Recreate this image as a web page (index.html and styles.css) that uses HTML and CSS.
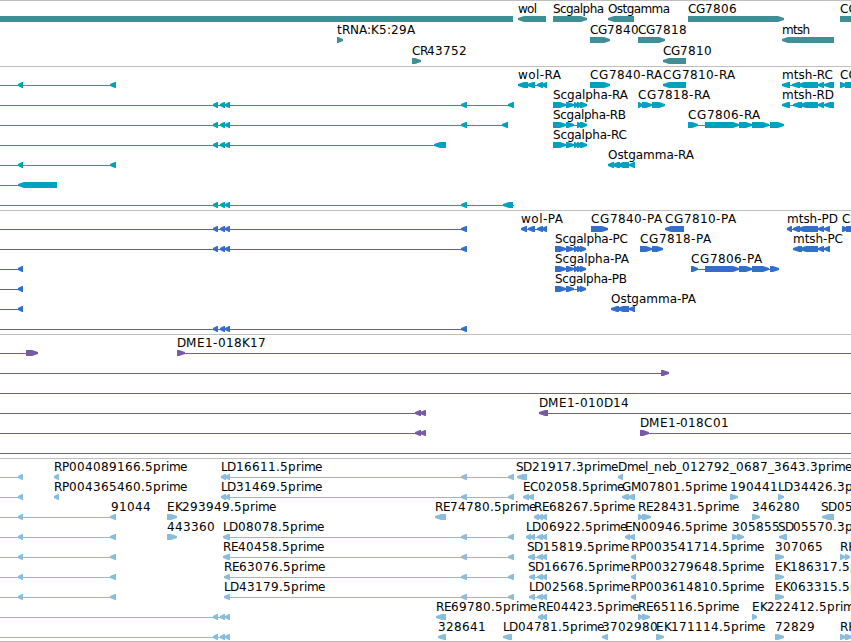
FILE: index.html
```html
<!DOCTYPE html>
<html lang="en">
<head>
<meta charset="utf-8">
<title>Genome region</title>
<link rel="stylesheet" href="styles.css">
</head>
<body>
<main class="browser">
<section class="track genes" id="genes"></section>
<section class="track transcripts" id="transcripts"></section>
<section class="track proteins" id="proteins"></section>
<section class="track clones" id="clones"></section>
<section class="track ests" id="ests"></section>
</main>
<script src="tracks.js"></script>
</body>
</html>
```
FILE: styles.css
```css
body { margin: 0; background: #fff; overflow: hidden; }
.browser { width: 851px; height: 642px; display: flex; flex-direction: column; box-sizing: border-box; border-bottom: 1px solid #bebebe; }
.track { border-top: 1px solid #bebebe; padding: 2px 0 1px; display: flex; flex-direction: column; --row: 20px; }
.row { display: block; width: 851px; height: var(--row); flex: none; overflow: visible; }
.genes { --row: 21px; padding-bottom: 0; color: #408e96; }
.transcripts { color: #00a0c0; }
.proteins { color: #326ecc; }
.clones { color: #7859a7; }
.ests { padding-bottom: 0; color: #89bddd; }
.row path, .row rect { fill: currentColor; }
.row rect { shape-rendering: crispEdges; }
.row text { fill: #000; font-family: "DejaVu Sans", sans-serif; font-size: 12px; }
```
FILE: tracks.js
```js
// Feature: direction, exon spans "a-b a-b", connector [from, to], label, label start, label end
const L = '<', R = '>', B = '=';
const mid = '213-218 220-225 225-230';
const f = (dir, exons, line, label, x, end) => ({ dir, exons, line, label, x, end });
const near = () => f(L, '18-23', [0, 20]);
const pair = () => f(L, '18-23 110-116', [0, 113]);
const scg = (exons, name, x, end) => f(R, exons, [x, 586], name, x, end);
const est = (x, exons, name, end) => f(L, exons + ' 461-467 508-514', [x, 513], name, x, end);

const tracks = {
  genes: [
    [f(B, '0-513'), f(L, '518-546', 0, 'wol', 518, 537), f(R, '553-587', 0, 'Scgalpha', 553, 604),
     f(L, '608-634', 0, 'Ostgamma', 608, 670), f(R, '688-784', 0, 'CG7806', 688, 737), f(B, '840-851', 0, 'CG', 840)],
    [f(R, '337-343', 0, 'tRNA:K5:29A', 337, 415), f(R, '590-610', 0, 'CG7840', 590, 639),
     f(R, '638-665', 0, 'CG7818', 638, 687), f(L, '782-834', 0, 'mtsh', 782, 810)],
    [f(R, '412-421', 0, 'CR43752', 412, 467), f(L, '663-686', 0, 'CG7810', 663, 712)]
  ],
  transcripts: [
    [pair(), f(L, '518-528 527-535 537-543 542-547', [518, 547], 'wol-RA', 518, 561),
     f(R, '590-610', 0, 'CG7840-RA', 590, 663), f(L, '663-686', 0, 'CG7810-RA', 663, 736),
     f(L, '782-790 792-800 798-818 818-824 824-834', [782, 834], 'mtsh-RC', 782, 833),
     f(R, '840-846 845-858', 0, 'CG', 840)],
    [f(L, mid + ' 461-467 508-514', [0, 513]),
     scg('553-566 566-574 574-578 577-582 580-587', 'Scgalpha-RA', 553, 628),
     f(R, '638-643 642-652 652-665', 0, 'CG7818-RA', 638, 711),
     f(L, '782-790 793-802 800-818 818-824 824-834', [782, 834], 'mtsh-RD', 782, 834)],
    [f(L, mid + ' 461-467 502-508', [0, 507]),
     scg('553-566 566-574 577-582 580-587', 'Scgalpha-RB', 553, 626),
     f(R, '688-698 705-739 739-752 752-769 770-784', [688, 784], 'CG7806-RA', 688, 761)],
    [f(L, mid + ' 434-446', [0, 440]),
     scg('553-566 566-574 574-578 577-582 580-587', 'Scgalpha-RC', 553, 627)],
    [pair(), f(L, '608-614 612-620 617-629 629-635', [608, 635], 'Ostgamma-RA', 608, 694)],
    [f(L, '18-57', [0, 20])],
    [f(L, mid + ' 461-467 503-513', [0, 514])]
  ],
  proteins: [
    [f(L, mid + ' 461-467', [0, 466]), f(L, '521-527 528-535 537-543 542-547', [521, 547], 'wol-PA', 521, 563),
     f(R, '591-608', 0, 'CG7840-PA', 591, 663), f(L, '665-684', 0, 'CG7810-PA', 665, 737),
     f(L, '787-792 793-800 798-818 818-824 824-830', [787, 830], 'mtsh-PD', 787, 838),
     f(R, '842-848 846-858', 0, 'C', 842)],
    [f(L, mid + ' 461-467', [0, 466]), scg('555-566 566-574 574-578 577-582 580-586', 'Scgalpha-PC', 555, 628),
     f(R, '640-652 652-663', 0, 'CG7818-PA', 640, 712),
     f(L, '793-802 800-818 818-824 824-830', [793, 830], 'mtsh-PC', 793, 843)],
    [near(), scg('555-566 566-574 574-578 577-582 580-586', 'Scgalpha-PA', 555, 629),
     f(R, '691-698 705-739 739-752 752-769 770-779', [691, 779], 'CG7806-PA', 691, 763)],
    [near(), scg('555-566 566-574 577-582 580-586', 'Scgalpha-PB', 555, 627)],
    [near(), f(L, '611-619 617-629 629-635', [611, 635], 'Ostgamma-PA', 611, 696)],
    [f(L, mid + ' 461-467', [0, 466])]
  ],
  clones: [
    [f(R, '26-38', [0, 38]), f(R, '177-185', [177, 851], 'DME1-018K17', 177, 266)],
    [f(R, '661-669', [0, 669])],
    [f(L, '', [0, 851])],
    [f(L, '415-421 420-426', [0, 426]), f(L, '539-548', [539, 851], 'DME1-010D14', 539, 629)],
    [f(L, '415-421 420-426', [0, 426]), f(R, '640-649', [640, 851], 'DME1-018C01', 640, 729)],
    [f(L, '', [0, 851])]
  ],
  ests: [
    [near(), f(L, '54-59', 0, 'RP004089166.5prime', 54, 187), est(221, '221-226 225-230', 'LD16611.5prime', 322),
     f(L, '517-527', 0, 'SD21917.3prime', 516, 618), f(L, '618-623', 0, 'Dmel_neb_012792_0687_3643.3prime', 618, 852)],
    [near(), f(L, '54-59', 0, 'RP004365460.5prime', 54, 187), est(221, '221-226 225-230', 'LD31469.5prime', 322),
     f(L, '523-529 528-534', 0, 'EC02058.5prime', 523, 624), f(L, '622-629 628-635', 0, 'GM07801.5prime', 622, 727),
     f(R, '730-738', 0, '190441', 730, 778), f(R, '778-784', 0, 'LD34426.3prime', 778, 879)],
    [pair(), f(L, '', 0, '91044', 111, 151), f(R, '167-177', 0, 'EK293949.5prime', 167, 276),
     f(L, '435-446', 0, 'RE74780.5prime', 435, 536), f(L, '534-539 538-543 542-547', 0, 'RE68267.5prime', 534, 635),
     f(R, '638-643 642-651', 0, 'RE28431.5prime', 638, 739), f(R, '752-760', 0, '346280', 752, 800),
     f(L, '822-834', 0, 'SD05', 821, 853)],
    [pair(), f(R, '167-177', 0, '443360', 167, 215), est(223, '223-230', 'LD08078.5prime', 324),
     f(L, '526-531 530-535 537-543 542-547', [526, 547], 'LD06922.5prime', 526, 627),
     f(L, '625-630 629-635', 0, 'EN00946.5prime', 625, 727), f(R, '732-738 737-744', 0, '305855', 732, 779),
     f(L, '779-787', 0, 'SD05570.3prime', 778, 879)],
    [pair(), est(223, '223-230', 'RE40458.5prime', 324),
     f(L, '528-535 537-543 542-547', [528, 547], 'SD15819.5prime', 527, 629),
     f(L, '631-636', 0, 'RP003541714.5prime', 631, 764), f(R, '775-784', 0, '307065', 775, 822),
     f(R, '840-845 845-850', 0, 'RH', 840)],
    [pair(), est(224, '224-230', 'RE63076.5prime', 325),
     f(L, '529-535 537-543 542-547', [529, 547], 'SD16676.5prime', 528, 630),
     f(L, '631-636', 0, 'RP003279648.5prime', 631, 764), f(R, '775-784', 0, 'EK186317.5prime', 775, 884)],
    [pair(), est(224, '224-230', 'LD43179.5prime', 325),
     f(L, '529-535 537-543 542-547', [529, 547], 'LD02568.5prime', 529, 630),
     f(L, '631-636', 0, 'RP003614810.5prime', 631, 764), f(R, '775-784', 0, 'EK063315.5prime', 775, 884)],
    [f(L, mid, [0, 228]), f(L, '436-446', 0, 'RE69780.5prime', 436, 537),
     f(L, '538-543 542-547', 0, 'RE04423.5prime', 538, 639), f(R, '638-643 642-650', 0, 'RE65116.5prime', 638, 739),
     f(R, '752-757', 0, 'EK222412.5prime', 752, 861)],
    [f(L, mid, [0, 228]), f(L, '438-446', 0, '328641', 438, 486), f(L, '503-512', 0, 'LD04781.5prime', 503, 604),
     f(L, '602-608', 0, '3702980', 602, 658), f(R, '656-664', 0, 'EK171114.5prime', 656, 765),
     f(R, '775-784', 0, '72829', 775, 815), f(R, '840-846 845-852', 0, 'RH', 840)]
  ]
};

const NS = 'http://www.w3.org/2000/svg';
function add(parent, name, attrs) {
  const node = document.createElementNS(NS, name);
  for (const key in attrs) node.setAttribute(key, attrs[key]);
  parent.appendChild(node);
  return node;
}

function exonPath(a, b, dir) {
  if (dir === B) return `M${a} 13H${b}V19H${a}Z`;
  const w = b - a;
  const head = w <= 6 ? w : Math.min(7, w - 1);
  return dir === L
    ? `M${b} 13V19H${a + head - 1}L${a} 17V15L${a + head - 1} 13Z`
    : `M${a} 13V19H${b - head + 1}L${b} 17V15L${b - head + 1} 13Z`;
}

// Whole-pixel advances of the label face; capitals and other letters share what is left
const fixed = { '.': 4, p: 8, r: 5, i: 3, m: 11, e: 7 };
const natural = { L: 6.3, D: 9, R: 8, P: 7, E: 7.6, K: 7.6, S: 7.6, C: 8.4, G: 9.3, M: 10.4, N: 9, A: 8.2,
  '-': 4.5, ':': 4, t: 4.7, n: 7.6, b: 7.6, l: 3.3, _: 6 };
function glyphStarts(label, x, end) {
  const isFixed = c => /\d/.test(c) || c in fixed;
  const advance = c => /\d/.test(c) ? 8 : fixed[c] || natural[c];
  let fixedSum = 0, freeSum = 0;
  for (const c of label) isFixed(c) ? fixedSum += advance(c) : freeSum += advance(c);
  const scale = freeSum ? (end - x - fixedSum) / freeSum : 1;
  let pos = x;
  return [...label].map(c => {
    const start = Math.round(pos);
    pos += isFixed(c) ? advance(c) : advance(c) * scale;
    return start;
  }).join(' ');
}

for (const id in tracks) {
  const section = document.getElementById(id);
  for (const row of tracks[id]) {
    const svg = add(section, 'svg', { class: 'row' });
    for (const item of row) {
      if (item.line) add(svg, 'rect', { x: item.line[0], y: 16, width: item.line[1] - item.line[0], height: 1 });
      for (const span of item.exons.split(' ').filter(Boolean)) {
        const [a, b] = span.split('-').map(Number);
        add(svg, 'path', { d: exonPath(a, b, item.dir) });
      }
      if (item.label) {
        const text = add(svg, 'text', { x: item.x, y: 10 });
        text.textContent = item.label;
        if (/\d/.test(item.label)) text.setAttribute('x', glyphStarts(item.label, item.x, item.end));
        else if (item.end) text.setAttribute('textLength', item.end - item.x);
      }
    }
  }
}
```
